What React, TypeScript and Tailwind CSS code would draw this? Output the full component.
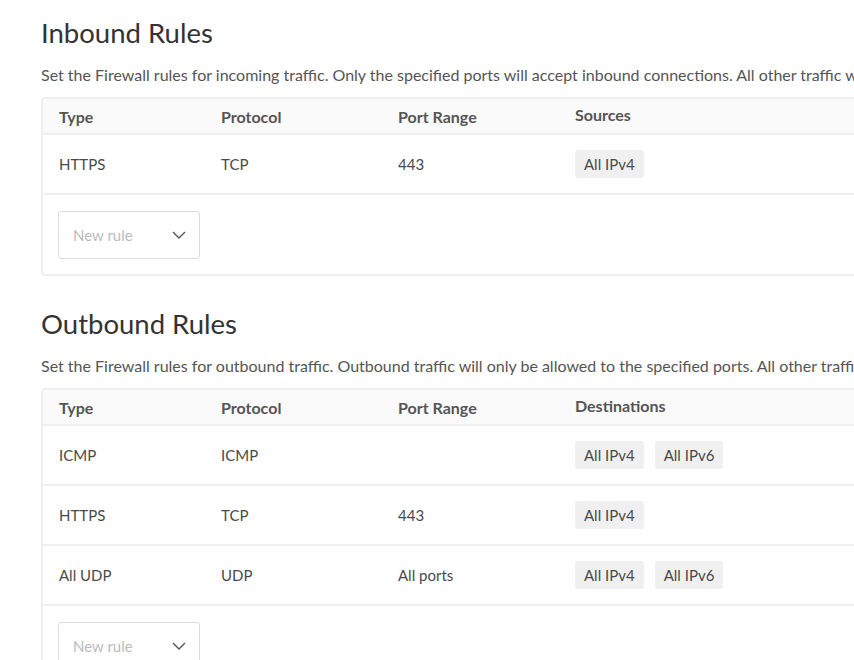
import React from "react";

type Rule = {
  type: string;
  protocol: string;
  ports: string;
  targets: string[];
};

const inbound: Rule[] = [{ type: "HTTPS", protocol: "TCP", ports: "443", targets: ["All IPv4"] }];

const outbound: Rule[] = [
  { type: "ICMP", protocol: "ICMP", ports: "", targets: ["All IPv4", "All IPv6"] },
  { type: "HTTPS", protocol: "TCP", ports: "443", targets: ["All IPv4"] },
  { type: "All UDP", protocol: "UDP", ports: "All ports", targets: ["All IPv4", "All IPv6"] },
];

function Chevron() {
  return (
    <svg width="14" height="8" viewBox="0 0 14 8" fill="none" className="text-[#555]">
      <path d="M1 1l6 6 6-6" stroke="currentColor" strokeWidth="1.4" />
    </svg>
  );
}

function RulesTable({ targetLabel, rules }: { targetLabel: string; rules: Rule[] }) {
  return (
    <div className="w-[1000px] rounded-[4px] border-2 border-[#efefef]">
      <div className="flex h-[36px] items-center border-b-2 border-[#efefef] bg-[#fafafa] text-[16px] font-bold text-[#555]">
        <div className="w-[178px] pl-[16px] pt-[2px]">Type</div>
        <div className="w-[177px] pt-[2px]">Protocol</div>
        <div className="w-[177px] pt-[2px]">Port Range</div>
        <div className="pb-[2px]">{targetLabel}</div>
      </div>
      {rules.map((r, i) => (
        <div
          key={i}
          className="flex h-[60px] items-center border-b-2 border-[#efefef] text-[15px] text-[#4a4a4a]"
        >
          <div className="w-[178px] pl-[16px]">{r.type}</div>
          <div className="w-[177px]">{r.protocol}</div>
          <div className="w-[177px]">{r.ports}</div>
          <div className="flex gap-[11px]">
            {r.targets.map((t) => (
              <span key={t} className="rounded-[3px] bg-[#f0f0f0] px-[9px] py-[4px] leading-[20px]">
                {t}
              </span>
            ))}
          </div>
        </div>
      ))}
      <div className="px-[15px] pt-[16px] pb-[15px]">
        <button className="flex h-[48px] w-[142px] items-center justify-between rounded-[3px] border border-[#dcdcdc] bg-white pl-[14px] pr-[13px] text-[15px] text-[#bbb]">
          New rule
          <Chevron />
        </button>
      </div>
    </div>
  );
}

function Section({
  title,
  description,
  targetLabel,
  rules,
}: {
  title: string;
  description: string;
  targetLabel: string;
  rules: Rule[];
}) {
  return (
    <section>
      <h2 className="text-[27.5px] leading-[32px] text-[#333]">{title}</h2>
      <p className="mt-[16px] mb-[12px] whitespace-nowrap text-[16px] leading-[20px] text-[#555]">
        {description}
      </p>
      <RulesTable targetLabel={targetLabel} rules={rules} />
    </section>
  );
}

export default function App() {
  return (
    <div className="h-[660px] w-[854px] overflow-hidden bg-white font-['Lato','Liberation_Sans',sans-serif]">
      <div className="flex flex-col gap-[32px] pl-[41px] pt-[17px]">
        <Section
          title="Inbound Rules"
          description="Set the Firewall rules for incoming traffic. Only the specified ports will accept inbound connections. All other traffic will be blocked."
          targetLabel="Sources"
          rules={inbound}
        />
        <Section
          title="Outbound Rules"
          description="Set the Firewall rules for outbound traffic. Outbound traffic will only be allowed to the specified ports. All other traffic will be blocked."
          targetLabel="Destinations"
          rules={outbound}
        />
      </div>
    </div>
  );
}
